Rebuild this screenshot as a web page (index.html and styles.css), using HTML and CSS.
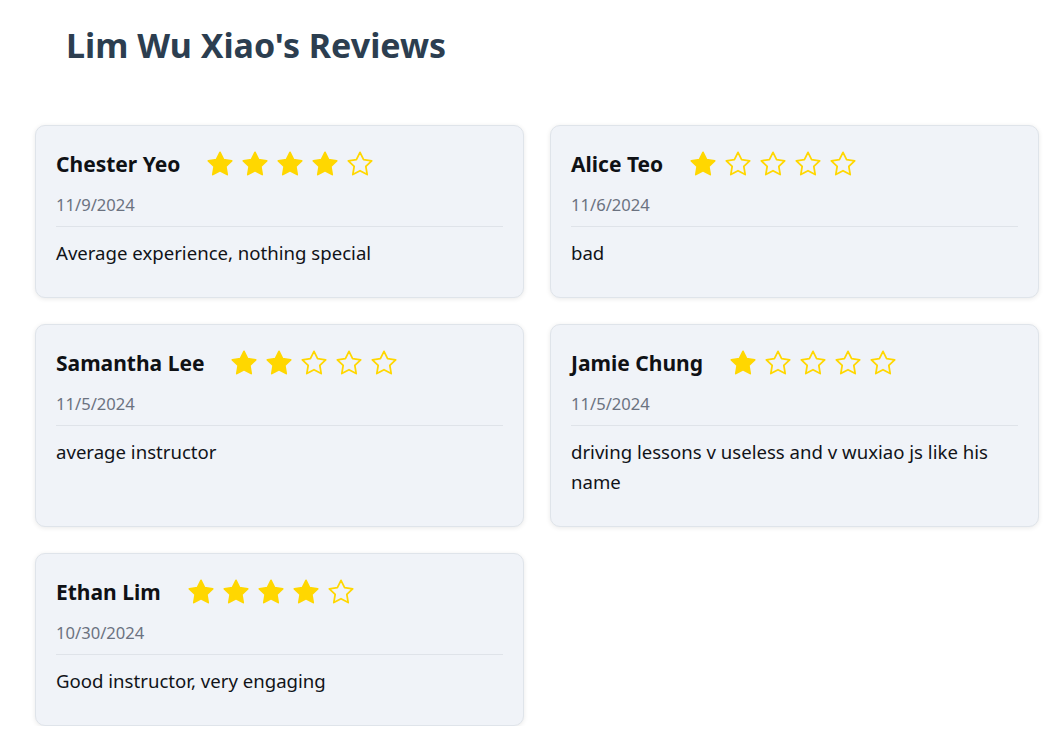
FILE: index.html
```html
<!DOCTYPE html>
<html>
<head>
<meta charset="utf-8">
<link rel="stylesheet" href="styles.css">
</head>
<body>
<svg width="0" height="0" class="defs">
  <defs>
    <path id="star" d="M12 2l3.09 6.26L22 9.27l-5 4.87 1.18 6.88L12 17.770l-6.18 3.25L7 14.14 2 9.27l6.91-1.01L12 2z"/>
  </defs>
</svg>
<div class="page">
  <h1 class="title">Lim Wu Xiao's Reviews</h1>
  <div class="grid">
    <div class="card">
      <div class="head"><span class="name">Chester Yeo</span>
        <span class="stars">
          <svg class="star on" viewBox="0 0 24 24"><use href="#star"/></svg>
          <svg class="star on" viewBox="0 0 24 24"><use href="#star"/></svg>
          <svg class="star on" viewBox="0 0 24 24"><use href="#star"/></svg>
          <svg class="star on" viewBox="0 0 24 24"><use href="#star"/></svg>
          <svg class="star" viewBox="0 0 24 24"><use href="#star"/></svg>
        </span>
      </div>
      <div class="date">11/9/2024</div>
      <p class="comment">Average experience, nothing special</p>
    </div>
    <div class="card">
      <div class="head"><span class="name">Alice Teo</span>
        <span class="stars">
          <svg class="star on" viewBox="0 0 24 24"><use href="#star"/></svg>
          <svg class="star" viewBox="0 0 24 24"><use href="#star"/></svg>
          <svg class="star" viewBox="0 0 24 24"><use href="#star"/></svg>
          <svg class="star" viewBox="0 0 24 24"><use href="#star"/></svg>
          <svg class="star" viewBox="0 0 24 24"><use href="#star"/></svg>
        </span>
      </div>
      <div class="date">11/6/2024</div>
      <p class="comment">bad</p>
    </div>
    <div class="card">
      <div class="head"><span class="name">Samantha Lee</span>
        <span class="stars">
          <svg class="star on" viewBox="0 0 24 24"><use href="#star"/></svg>
          <svg class="star on" viewBox="0 0 24 24"><use href="#star"/></svg>
          <svg class="star" viewBox="0 0 24 24"><use href="#star"/></svg>
          <svg class="star" viewBox="0 0 24 24"><use href="#star"/></svg>
          <svg class="star" viewBox="0 0 24 24"><use href="#star"/></svg>
        </span>
      </div>
      <div class="date">11/5/2024</div>
      <p class="comment">average instructor</p>
    </div>
    <div class="card">
      <div class="head"><span class="name">Jamie Chung</span>
        <span class="stars">
          <svg class="star on" viewBox="0 0 24 24"><use href="#star"/></svg>
          <svg class="star" viewBox="0 0 24 24"><use href="#star"/></svg>
          <svg class="star" viewBox="0 0 24 24"><use href="#star"/></svg>
          <svg class="star" viewBox="0 0 24 24"><use href="#star"/></svg>
          <svg class="star" viewBox="0 0 24 24"><use href="#star"/></svg>
        </span>
      </div>
      <div class="date">11/5/2024</div>
      <p class="comment">driving lessons v useless and v wuxiao js like his name</p>
    </div>
    <div class="card">
      <div class="head"><span class="name">Ethan Lim</span>
        <span class="stars">
          <svg class="star on" viewBox="0 0 24 24"><use href="#star"/></svg>
          <svg class="star on" viewBox="0 0 24 24"><use href="#star"/></svg>
          <svg class="star on" viewBox="0 0 24 24"><use href="#star"/></svg>
          <svg class="star on" viewBox="0 0 24 24"><use href="#star"/></svg>
          <svg class="star" viewBox="0 0 24 24"><use href="#star"/></svg>
        </span>
      </div>
      <div class="date">10/30/2024</div>
      <p class="comment">Good instructor, very engaging</p>
    </div>
  </div>
</div>
</body>
</html>
```

FILE: styles.css
```css
html, body {
  margin: 0;
  padding: 0;
  background: #ffffff;
}
body {
  font-family: "Noto Sans", "Open Sans", sans-serif;
}
.defs {
  position: absolute;
  width: 0;
  height: 0;
}
.page {
  padding: 0 15px 0 35px;
}
.title {
  margin: 0;
  padding: 22px 0 0 31px;
  height: 125px;
  box-sizing: border-box;
  font-size: 34px;
  font-weight: 700;
  color: #2c3e50;
  line-height: 46px;
}
.grid {
  display: grid;
  grid-template-columns: 1fr 1fr;
  column-gap: 26px;
  row-gap: 26px;
}
.card {
  background: #f0f3f8;
  border: 1px solid #dfe4ea;
  border-radius: 10px;
  box-shadow: 0 1px 5px rgba(0, 0, 0, 0.09);
  padding: 20px 20px 29px;
  min-height: 172px;
  box-sizing: border-box;
}
.head {
  display: flex;
  align-items: center;
  gap: 26px;
  height: 36px;
}
.name {
  font-size: 21px;
  font-weight: 700;
  color: #0f1115;
}
.stars {
  display: flex;
  gap: 7px;
}
.star {
  width: 28px;
  height: 28px;
  fill: none;
  stroke: #ffd700;
  stroke-width: 1.5;
  stroke-linejoin: round;
}
.star.on {
  fill: #ffd700;
}
.date {
  margin-top: 11px;
  font-size: 16.6px;
  color: #6b7280;
  line-height: 24px;
  padding-bottom: 9px;
  border-bottom: 1px solid #dfe3e9;
}
.comment {
  margin: 11px 0 0;
  font-size: 18.6px;
  line-height: 30px;
  color: #111318;
}
```
